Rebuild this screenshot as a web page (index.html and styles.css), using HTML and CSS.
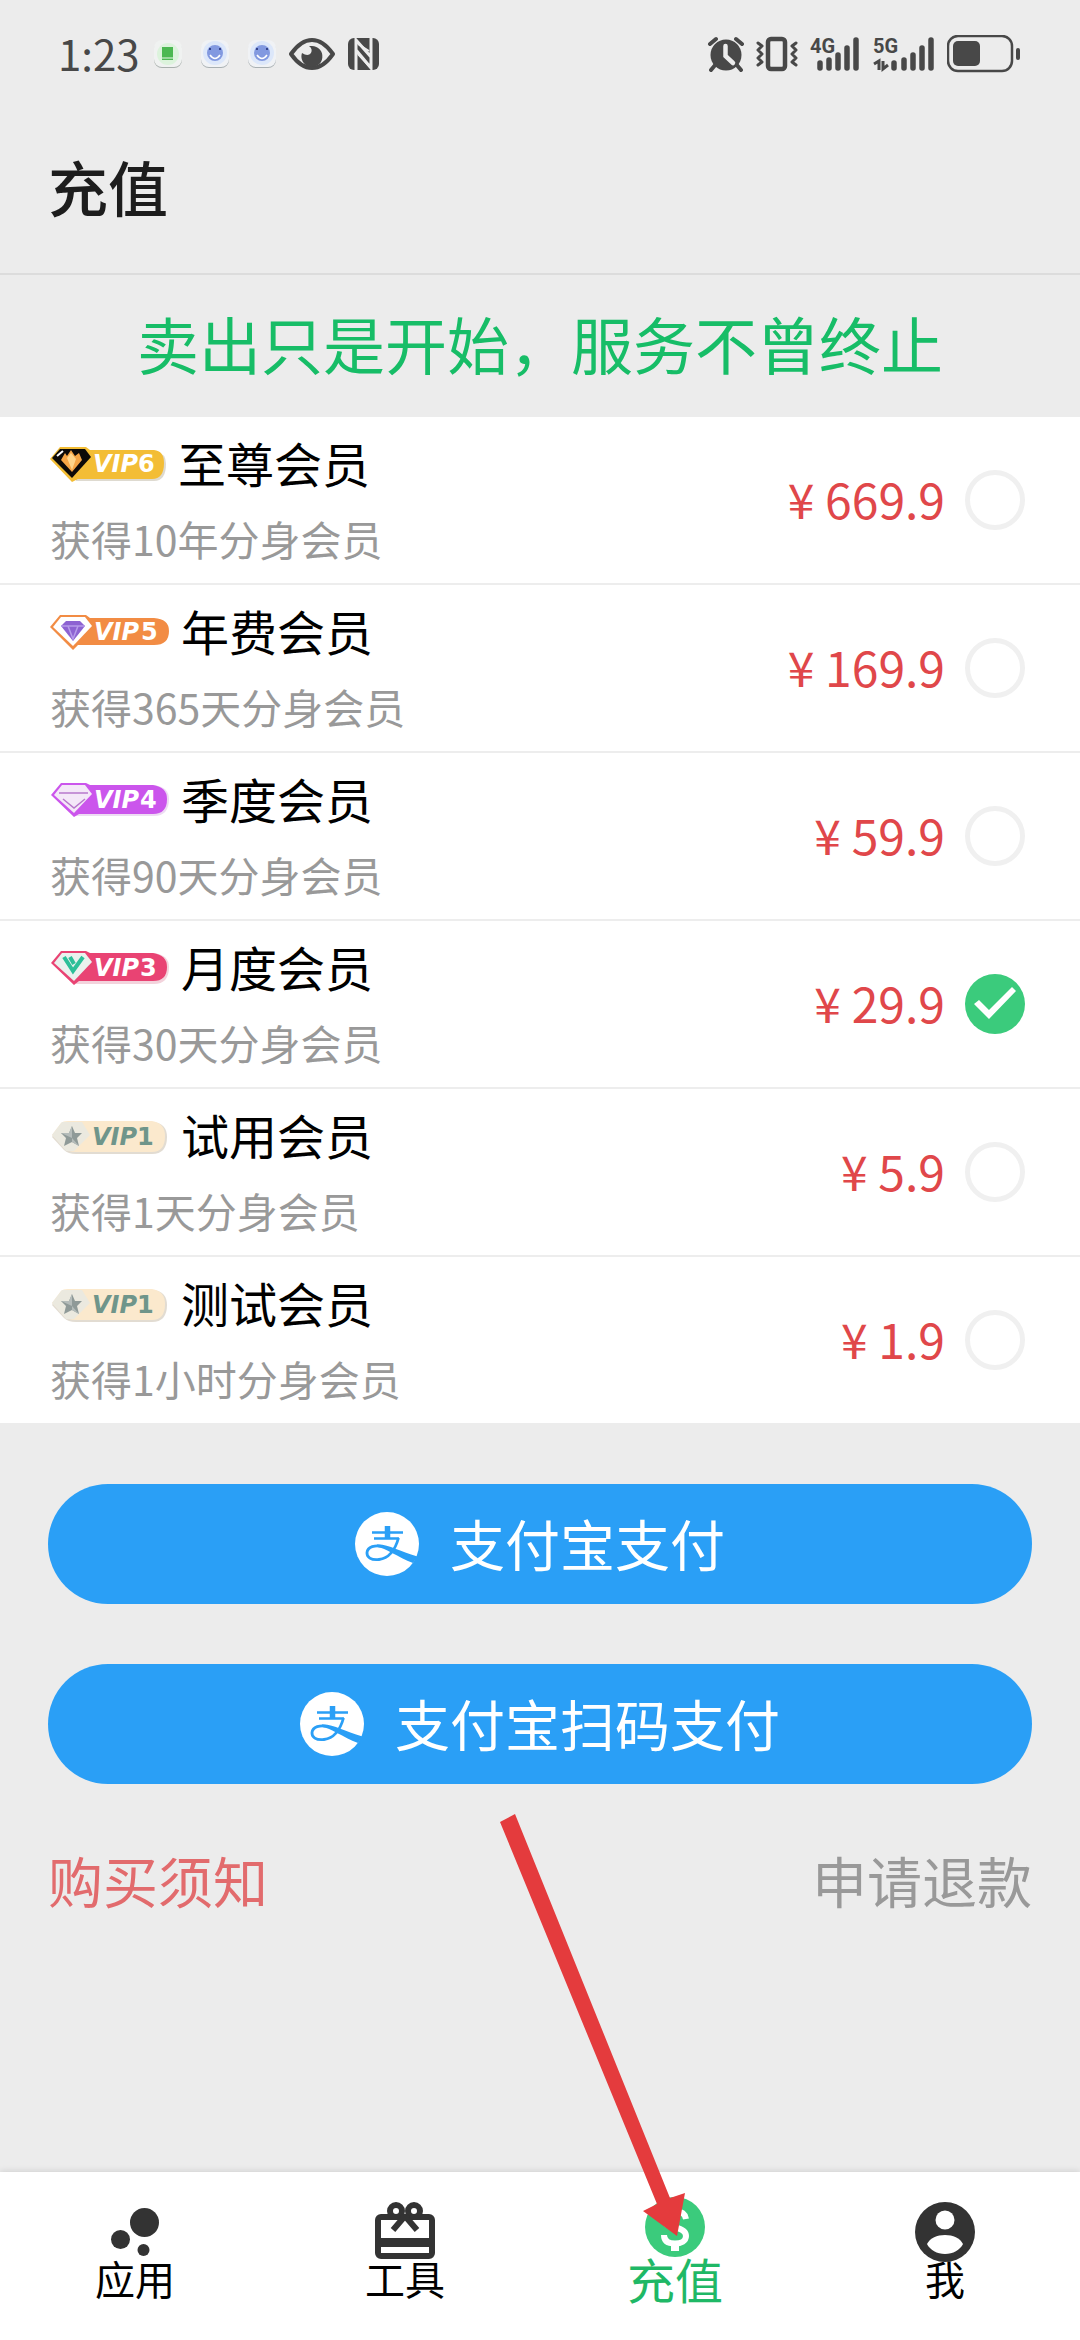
FILE: index.html
```html
<!DOCTYPE html>
<html lang="zh-CN">
<head>
<meta charset="utf-8">
<meta name="viewport" content="width=device-width, initial-scale=1">
<title>充值</title>
<link rel="stylesheet" href="styles.css">
</head>
<body>
<svg class="defs" aria-hidden="true">
  <defs>
    <symbol id="alipay" viewBox="0 0 64 64">
      <circle cx="32" cy="32" r="32" fill="#fff"/>
      <path d="M17 20.5H48M19 26.5H44" stroke="#2a9ff6" stroke-width="2.4" fill="none"/>
      <path d="M32.500 14V27" stroke="#2a9ff6" stroke-width="5.500"/>
      <path d="M43.500 26C41 35 36 46 24 47.500C16 48.500 11.500 45 12 40.500C12.500 35 20 32.500 28 34.500" stroke="#2a9ff6" stroke-width="2.800" fill="none"/>
      <path d="M22 32.500C34 32 44 39.500 62.500 44.500L58 51C50 48 44 44.500 37 41C31 38 27 35.500 22 35Z" fill="#2a9ff6"/>
    </symbol>
    <symbol id="vip1" viewBox="0 0 120 36">
      <path d="M2 19L12 6Q14 4 18 4H104Q117 6 117 19Q117 36 102 36H26Q18 36 14 32Z" fill="#e2dcd2"/>
      <path d="M2 17L11 5Q13 3 18 3H102Q115 5 115 18Q115 34 102 34H26Q18 34 14 30Z" fill="#fbe9cd"/>
      <path d="M2 17L12 4H32L40 17L24 33H16Z" fill="#ebe9df"/>
      <path d="M22 8L25 15L32 15L27 20L29 28L22 24L14 28L16 20L11 15L19 15Z" fill="#8f9a98"/>
      <path d="M22 8V20L11 15L19 15ZM22 20L29 28L22 24Z" fill="#b5bcba"/>
      <text class="vip vip-pale" x="42" y="27">VIP</text>
      <text class="vip-digit vip-pale" x="87" y="27">1</text>
    </symbol>
  </defs>
</svg>
<div class="page">
  <div class="status">
    <span class="clock">1:23</span>
    <span class="notices">
      <svg width="30" height="30" viewBox="0 0 30 30"><rect x="1" y="3" width="28" height="26" rx="8" fill="#a9b0ad"/><rect x="1" y="1" width="28" height="27" rx="8" fill="#f0f2f1"/><circle cx="15" cy="15" r="11" fill="#dcf3dc"/><path d="M9 8H20V21H9Z" fill="#4cb852"/><path d="M9 19H20" stroke="#e8f7e8" stroke-width="1"/></svg>
      <svg width="30" height="30" viewBox="0 0 30 30"><rect x="1" y="3" width="28" height="26" rx="8" fill="#a9b0b3"/><rect x="1" y="1" width="28" height="27" rx="8" fill="#f0f2f5"/><circle cx="15" cy="14" r="12" fill="#dce7fa"/><circle cx="15" cy="14" r="8" fill="#8299e0"/><path d="M10 16Q15 23 20 16" stroke="#fff" stroke-width="1.500" fill="none"/><path d="M9 10H11M19 10H21" stroke="#34458d" stroke-width="2"/></svg>
      <svg width="30" height="30" viewBox="0 0 30 30"><rect x="1" y="3" width="28" height="26" rx="8" fill="#a9b0b3"/><rect x="1" y="1" width="28" height="27" rx="8" fill="#f0f2f5"/><circle cx="15" cy="14" r="12" fill="#dce7fa"/><circle cx="15" cy="14" r="8" fill="#8299e0"/><path d="M10 16Q15 23 20 16" stroke="#fff" stroke-width="1.500" fill="none"/><path d="M9 10H11M19 10H21" stroke="#34458d" stroke-width="2"/></svg>
    </span>
    <svg class="eye" width="46" height="32" viewBox="0 0 46 32"><path d="M2 16C9 6 16 2 23 2S37 6 44 16C37 26 30 30 23 30S9 26 2 16Z" fill="none" stroke="#484848" stroke-width="4" stroke-linejoin="round"/><path d="M23 8A10.500 10.500 0 1 1 13 15Q19 19 22 15Q24 11 20 8Z" fill="#484848"/></svg>
    <svg width="32" height="34" viewBox="0 0 32 34"><rect x="1" y="1" width="31" height="32" rx="6" fill="#484848"/><path d="M9 33V3L24 20M24 1V31L9 13" fill="none" stroke="#ececec" stroke-width="3"/><path d="M11 17L23 30M11 7L22 14" stroke="#ececec" stroke-width="2"/></svg>
    <span class="spacer"></span>
    <svg width="38" height="36" viewBox="0 0 38 36"><circle cx="19" cy="19" r="15.500" fill="#484848"/><path d="M3 8L9 3M35 8L29 3M9 28L4 34M29 28L34 34" stroke="#484848" stroke-width="4" stroke-linecap="round"/><path d="M18.500 10V20L26 27" fill="none" stroke="#ececec" stroke-width="4.500" stroke-linecap="round"/></svg>
    <svg class="vibrate" width="44" height="36" viewBox="0 0 44 36"><rect x="13" y="3" width="17" height="30" rx="3" fill="none" stroke="#484848" stroke-width="4.500"/><path d="M3 7L7 10L3 14L7 18L3 22L7 26L3 29M41 7L37 10L41 14L37 18L41 22L37 26L41 29" fill="none" stroke="#484848" stroke-width="3" stroke-linecap="round" stroke-linejoin="round"/></svg>
    <svg class="signal" width="52" height="44" viewBox="0 -4 52 44"><text class="net" x="0" y="17">4G</text><path d="M10 27V32M19 24V32M28 19V32M37 12V32M46 4V32" stroke="#484848" stroke-width="5.500" stroke-linecap="round"/></svg>
    <svg class="signal" width="64" height="44" viewBox="0 -4 64 44"><text class="net" x="0" y="17">5G</text><path d="M1 28L6 25V34M10 25V33L15 29" stroke="#484848" stroke-width="3" fill="none"/><path d="M21 27V32M31 24V32M40 19V32M49 12V32M58 4V32" stroke="#484848" stroke-width="5.500" stroke-linecap="round"/></svg>
    <svg class="battery" width="74" height="38" viewBox="0 0 74 38"><rect x="1" y="1" width="64" height="35" rx="10" fill="none" stroke="#484848" stroke-width="2.500"/><rect x="6" y="6" width="27" height="25" rx="5" fill="#484848"/><rect x="69" y="13" width="4" height="12" rx="2" fill="#484848"/></svg>
  </div>

  <header class="titlebar"><h1>充值</h1></header>

  <main>
    <p class="slogan">卖出只是开始，服务不曾终止</p>

    <ul class="plans">
      <li><label class="plan">
        <span class="info">
          <span class="name">
            <svg width="117" height="36" viewBox="0 0 117 36"><path d="M24 6H106Q116 7 116 18Q116 35 104 35H26Z" fill="#dedad0"/><path d="M0 13L10 1H36L40 4H104Q114 5 114 17Q114 33 102 33H28L22 36Z" fill="#f3bd35"/><path d="M2 12L10 3H35L41 11L22 32Z" fill="#0c0a08"/><path d="M11 14L15 7L17 10L21 4L25 10L29 7L32 14L22 26Z" fill="#f5a545"/><path d="M17 12L21 7L26 13L22 24Z" fill="#ffd58a"/><path d="M7 10L13 5" stroke="#fff" stroke-width="2"/><text class="vip" x="43" y="26">VIP</text><text class="vip-digit" x="88" y="26">6</text></svg>
            至尊会员</span>
          <span class="desc">获得10年分身会员</span>
        </span>
        <span class="price">¥ 669.9</span>
        <input type="radio" name="plan" value="vip6">
      </label></li>
      <li><label class="plan">
        <span class="info">
          <span class="name">
            <svg width="120" height="36" viewBox="0 0 120 36"><path d="M0 13L10 1H36L40 4H104Q119 5 119 17Q119 31 104 31H28L23 36Z" fill="#f28c44"/><path d="M3 13L11 3H35L42 12L23 32Z" fill="#fff"/><path d="M11 12L16 7H30L35 12L23 27Z" fill="#8d63d2"/><path d="M11 12H35M18 12L23 25L28 12" fill="none" stroke="#b79cea" stroke-width="1.500"/><text class="vip" x="44" y="26">VIP</text><text class="vip-digit" x="91" y="26">5</text></svg>
            年费会员</span>
          <span class="desc">获得365天分身会员</span>
        </span>
        <span class="price">¥ 169.9</span>
        <input type="radio" name="plan" value="vip5">
      </label></li>
      <li><label class="plan">
        <span class="info">
          <span class="name">
            <svg width="120" height="36" viewBox="0 0 120 36"><path d="M24 3H104Q119 5 119 17Q119 34 104 34H26Z" fill="#eddcf3"/><path d="M1 13L11 1H36L40 3H103Q117 5 117 17Q117 32 103 32H29L24 35Z" fill="#cb55ec"/><path d="M4 13L12 3H35L42 12L24 31Z" fill="#f4e8f8"/><path d="M9 11H38M13 17L24 26L35 17" fill="none" stroke="#b778cb" stroke-width="1.500"/><text class="vip" x="44" y="26">VIP</text><text class="vip-digit" x="90" y="26">4</text></svg>
            季度会员</span>
          <span class="desc">获得90天分身会员</span>
        </span>
        <span class="price">¥ 59.9</span>
        <input type="radio" name="plan" value="vip4">
      </label></li>
      <li><label class="plan">
        <span class="info">
          <span class="name">
            <svg width="120" height="36" viewBox="0 0 120 36"><path d="M24 3H104Q119 5 119 17Q119 34 104 34H26Z" fill="#f3d3dc"/><path d="M1 13L11 1H36L40 3H103Q117 5 117 17Q117 31 103 31H29L24 35Z" fill="#e94373"/><path d="M4 13L12 3H35L42 12L24 31Z" fill="#eaf1ee"/><path d="M14 7L23 21L33 7M20 7L24 14" fill="none" stroke="#2cbf98" stroke-width="4"/><text class="vip" x="44" y="26">VIP</text><text class="vip-digit" x="90" y="26">3</text></svg>
            月度会员</span>
          <span class="desc">获得30天分身会员</span>
        </span>
        <span class="price">¥ 29.9</span>
        <input type="radio" name="plan" value="vip3" checked>
      </label></li>
      <li><label class="plan">
        <span class="info">
          <span class="name"><svg width="120" height="36"><use href="#vip1"/></svg>试用会员</span>
          <span class="desc">获得1天分身会员</span>
        </span>
        <span class="price">¥ 5.9</span>
        <input type="radio" name="plan" value="trial">
      </label></li>
      <li><label class="plan">
        <span class="info">
          <span class="name"><svg width="120" height="36"><use href="#vip1"/></svg>测试会员</span>
          <span class="desc">获得1小时分身会员</span>
        </span>
        <span class="price">¥ 1.9</span>
        <input type="radio" name="plan" value="test">
      </label></li>
    </ul>

    <div class="actions">
      <button type="button" class="pay"><svg width="64" height="64"><use href="#alipay"/></svg><span>支付宝支付</span></button>
      <button type="button" class="pay"><svg width="64" height="64"><use href="#alipay"/></svg><span>支付宝扫码支付</span></button>
    </div>

    <div class="links">
      <a href="#notice" class="notice">购买须知</a>
      <a href="#refund" class="refund">申请退款</a>
    </div>
  </main>

  <nav class="tabs">
    <a href="#apps" class="tab">
      <svg width="60" height="60" viewBox="0 0 60 60"><g fill="#333"><circle cx="39.500" cy="20.500" r="14.500"/><circle cx="15.500" cy="37.500" r="9.500"/><circle cx="38.500" cy="48" r="6"/></g></svg>
      <span>应用</span></a>
    <a href="#tools" class="tab">
      <svg width="60" height="60" viewBox="0 0 60 60"><rect x="3" y="15" width="54" height="39" rx="3" fill="none" stroke="#333" stroke-width="6"/><path d="M3 40.500H57" stroke="#333" stroke-width="9"/><circle cx="21" cy="9" r="6" fill="none" stroke="#333" stroke-width="6"/><circle cx="39" cy="9" r="6" fill="none" stroke="#333" stroke-width="6"/><path d="M23 12H37L30 17Z" fill="#333"/><path d="M30 14L18 28M30 14L42 28" stroke="#333" stroke-width="6"/></svg>
      <span>工具</span></a>
    <a href="#recharge" class="tab active" aria-current="page">
      <svg width="60" height="60" viewBox="0 0 60 60"><circle cx="30" cy="30" r="30" fill="#3bcb7c"/><path d="M41 22C40 16 36 14 30 14C23 14 19 17 19 22C19 27 23 29 30 30.500C37 32 41 34 41 39C41 44 36 46.500 30 46.500C23 46.500 19 44 19 38" fill="none" stroke="#fff" stroke-width="6"/><path d="M30 6V14M30 46V54" stroke="#fff" stroke-width="8"/></svg>
      <span>充值</span></a>
    <a href="#me" class="tab">
      <svg width="60" height="60" viewBox="0 0 60 60"><circle cx="30" cy="30" r="30" fill="#333"/><circle cx="30" cy="18" r="9.500" fill="#fff"/><path d="M12 42C15 36 22 33 30 33S45 36 48 42C45 48 38 52 30 52S15 48 12 42Z" fill="#fff"/></svg>
      <span>我</span></a>
  </nav>

  <svg class="pointer" width="190" height="424" viewBox="0 0 190 424" aria-hidden="true"><path d="M0 8L15 0L170 384L185 379L177 422L143 397L157 390Z" fill="#e43b3d"/></svg>
</div>
</body>
</html>
```
FILE: styles.css
```css
* {
  box-sizing: border-box;
}

body {
  margin: 0;
  background: #ececec;
  color: #000;
  font-family: "Noto Sans CJK SC", "Noto Sans", sans-serif;
}

h1,
p,
ul {
  margin: 0;
  padding: 0;
  font-weight: 400;
}

a {
  text-decoration: none;
}

svg {
  display: block;
  flex: none;
}

.defs {
  position: absolute;
  width: 0;
  height: 0;
}

.page {
  position: relative;
  min-height: 100vh;
  display: flex;
  flex-direction: column;
}

/* Status bar */
.status {
  display: flex;
  align-items: center;
  height: 108px;
  padding: 0 59px 0 58px;
}

.clock {
  padding-bottom: 2px;
  color: #484848;
  font-size: 42px;
  line-height: 48px;
}

.notices {
  display: flex;
  gap: 17px;
  margin: 0 12px 0 13px;
}

.eye {
  margin-right: 12px;
}

.spacer {
  flex: 1;
}

.vibrate,
.battery {
  margin-left: 10px;
}

.signal {
  margin-left: 11px;
}

.net {
  font: 700 20px Roboto, sans-serif;
  fill: #484848;
}

/* Title bar */
.titlebar {
  padding: 48px 48px 57px;
  border-bottom: 2px solid #dcdcdc;
}

.titlebar h1 {
  color: #1d1d1d;
  font-size: 60px;
  font-weight: 500;
  line-height: 60px;
}

.slogan {
  padding: 38px 0 43px;
  color: #17bd67;
  font-size: 62px;
  line-height: 61px;
  text-align: center;
}

/* Plans */
.plans {
  list-style: none;
  background: #fff;
}

.plans li + li {
  border-top: 2px solid #ededed;
}

.plan {
  display: flex;
  align-items: center;
  gap: 20px;
  padding: 17px 55px 17px 50px;
}

.info {
  flex: 1;
  display: flex;
  flex-direction: column;
  gap: 20px;
}

.name {
  display: flex;
  align-items: center;
  gap: 11px;
  font-size: 48px;
  line-height: 56px;
}

.name svg {
  margin-top: 4px;
}

.desc {
  color: #999;
  font-size: 41px;
  line-height: 56px;
}

.price {
  padding-bottom: 4px;
  color: #e0474a;
  font-size: 48px;
  line-height: 56px;
}

.plan input {
  appearance: none;
  flex: none;
  width: 60px;
  height: 60px;
  margin: 0;
  border: 5px solid #f0f0f0;
  border-radius: 50%;
}

.plan input:checked {
  border: 0;
  background: #3bcb7c;
}

.plan input:checked::before {
  content: "";
  display: block;
  height: 60px;
  background: #fff;
  clip-path: polygon(14px 26px, 24px 36px, 47px 13px, 51px 17px, 24px 45px, 9px 30px);
}

.vip,
.vip-digit {
  font-family: "DejaVu Sans", sans-serif;
  font-size: 24px;
  font-weight: 700;
  fill: #fff;
}

.vip {
  font-style: italic;
}

.vip-pale {
  fill: #6f958a;
}

/* Payment */
.actions {
  display: flex;
  flex-direction: column;
  gap: 60px;
  padding: 61px 48px 0;
}

.pay {
  display: flex;
  align-items: center;
  justify-content: center;
  gap: 31px;
  height: 120px;
  padding: 0;
  border: 0;
  border-radius: 60px;
  background: #2a9ff6;
  color: #fff;
  font-family: inherit;
  font-size: 55px;
  line-height: 60px;
}

.pay span {
  padding-bottom: 5px;
}

.links {
  display: flex;
  justify-content: space-between;
  padding: 65px 48px;
  font-size: 55px;
  line-height: 60px;
}

.notice {
  color: #e26b6d;
}

.refund {
  color: #999;
}

/* Bottom navigation */
.tabs {
  display: flex;
  height: 168px;
  margin-top: auto;
  padding-bottom: 16px;
  background: #fff;
  box-shadow: 0 -1px 6px rgba(0, 0, 0, 0.12);
}

.tab {
  flex: 1;
  display: flex;
  flex-direction: column;
  align-items: center;
  justify-content: center;
  color: #000;
  font-size: 40px;
  line-height: 32px;
}

.tab.active {
  color: #1fb866;
  font-size: 48px;
  line-height: 42px;
}

/* Arrow laid over the page, ending on the active tab */
.pointer {
  position: absolute;
  left: 500px;
  bottom: 102px;
  pointer-events: none;
}
```
